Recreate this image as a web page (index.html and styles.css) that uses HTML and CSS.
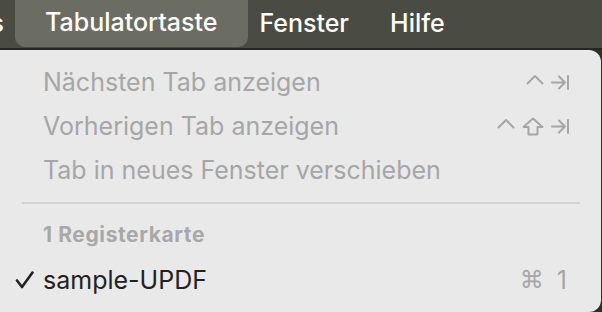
FILE: index.html
```html
<!DOCTYPE html>
<html lang="de">
<head>
<meta charset="utf-8">
<title>Tabulatortaste</title>
<link rel="stylesheet" href="styles.css">
</head>
<body>
<div class="screen">
  <nav class="menubar">
    <span class="mb-item mb-cut"><span>s</span></span>
    <span class="mb-item mb-active">Tabulatortaste</span>
    <span class="mb-item mb-fenster">Fenster</span>
    <span class="mb-item mb-hilfe">Hilfe</span>
  </nav>
  <div class="menu">
    <div class="item disabled">
      <span class="check"></span>
      <span class="label">Nächsten Tab anzeigen</span>
      <span class="keys">
        <svg class="k-ctrl" width="18" height="11" viewBox="0 0 18 11"><path d="M1.5 9.5 L9 2 L16.5 9.5" fill="none" stroke="currentColor" stroke-width="2" stroke-linecap="round" stroke-linejoin="round"/></svg>
        <svg class="k-tab" width="18" height="15" viewBox="0 0 18 15"><path d="M1 7.5 H14 M8 1.5 L14 7.5 L8 13.5 M17 1 V14" fill="none" stroke="currentColor" stroke-width="2" stroke-linecap="round" stroke-linejoin="round"/></svg>
      </span>
    </div>
    <div class="item disabled">
      <span class="check"></span>
      <span class="label">Vorherigen Tab anzeigen</span>
      <span class="keys">
        <svg class="k-ctrl" width="18" height="11" viewBox="0 0 18 11"><path d="M1.5 9.5 L9 2 L16.5 9.5" fill="none" stroke="currentColor" stroke-width="2" stroke-linecap="round" stroke-linejoin="round"/></svg>
        <svg class="k-shift" width="22" height="19" viewBox="0 0 22 19"><path d="M11 1.5 L20.5 10 H15.5 V17.5 H6.5 V10 H1.5 Z" fill="none" stroke="currentColor" stroke-width="2" stroke-linejoin="round"/></svg>
        <svg class="k-tab" width="18" height="15" viewBox="0 0 18 15"><path d="M1 7.5 H14 M8 1.5 L14 7.5 L8 13.5 M17 1 V14" fill="none" stroke="currentColor" stroke-width="2" stroke-linecap="round" stroke-linejoin="round"/></svg>
      </span>
    </div>
    <div class="item disabled">
      <span class="check"></span>
      <span class="label">Tab in neues Fenster verschieben</span>
    </div>
    <div class="sep"></div>
    <div class="header">1 Registerkarte</div>
    <div class="item">
      <span class="check">
        <svg width="19" height="18" viewBox="0 0 19 18"><path d="M2 9.5 L7 16 L17.5 1.5" fill="none" stroke="currentColor" stroke-width="2.6" stroke-linecap="round" stroke-linejoin="round"/></svg>
      </span>
      <span class="label">sample-UPDF</span>
      <span class="keys keys-cmd"><span class="cmd">⌘</span><span class="num">1</span></span>
    </div>
  </div>
</div>
</body>
</html>
```

FILE: styles.css
```css
* { box-sizing: border-box; }
html, body {
  margin: 0;
  padding: 0;
  width: 602px;
  height: 312px;
  overflow: hidden;
  background: #2e2f2a;
}
.screen {
  width: 602px;
  height: 312px;
  overflow: hidden;
  font-family: Inter, "Noto Sans", sans-serif;
}
.menubar {
  height: 50px;
  display: flex;
  align-items: stretch;
  background: #4a4b42;
  border-bottom: 2px solid #25261f;
  color: #ffffff;
  font-size: 25px;
  font-weight: 500;
  white-space: nowrap;
}
.mb-item {
  display: flex;
  align-items: center;
  padding-bottom: 3px;
}
.mb-cut {
  width: 4px;
  flex: none;
  overflow: hidden;
  justify-content: flex-end;
}
.mb-active {
  margin-left: 11px;
  padding: 0 31px 3px 30px;
  background: #6b6d63;
  border-radius: 0 0 10px 10px;
  height: 47px;
}
.mb-fenster { margin-left: 11px; }
.mb-hilfe { margin-left: 41px; }

.menu {
  margin-left: -12px;
  width: 613px;
  height: 262px;
  background: #e9e9e9;
  border-radius: 0 12px 12px 12px;
  padding-top: 10px;
  color: #a6a6a8;
  font-size: 25px;
}
.item {
  height: 44px;
  display: flex;
  align-items: center;
  white-space: nowrap;
}
.check {
  width: 55px;
  flex: none;
  display: flex;
  align-items: center;
  padding-left: 27px;
}
.label {
  flex: 1;
}
.keys {
  display: flex;
  align-items: center;
  gap: 7px;
  padding-right: 32px;
  color: #a6a6a8;
}
.k-ctrl { margin-top: -6px; }
.keys-cmd {
  gap: 13px;
  padding-right: 34px;
}
.cmd {
  font-family: "DejaVu Sans", sans-serif;
  font-size: 24px;
}
.sep {
  height: 2px;
  background: #d3d3d3;
  margin: 10px 21px 10px 34px;
}
.header {
  height: 44px;
  display: flex;
  align-items: center;
  padding-left: 55px;
  padding-bottom: 3px;
  font-size: 21px;
  font-weight: 700;
  letter-spacing: 0.6px;
  color: #a8a8aa;
}
.item:not(.disabled) {
  color: #222222;
}
```
